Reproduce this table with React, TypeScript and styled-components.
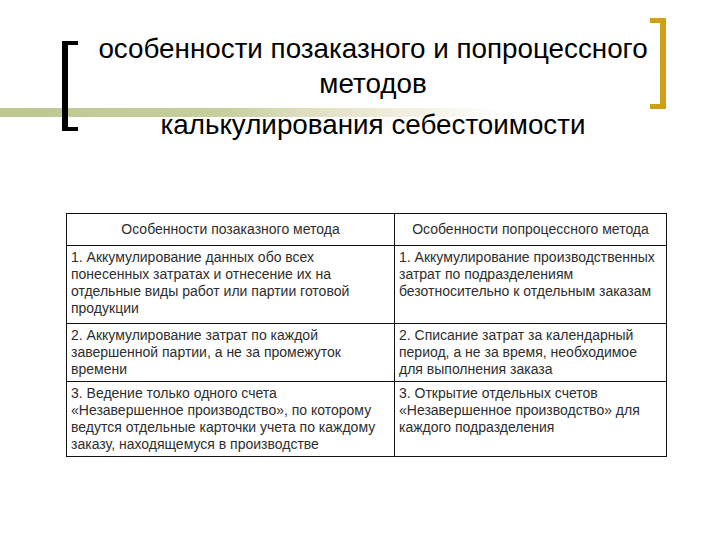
import React from 'react';
import styled, { createGlobalStyle } from 'styled-components';

const GlobalStyle = createGlobalStyle`
  html, body {
    margin: 0;
    padding: 0;
    background: #ffffff;
  }
  body {
    font-family: "Liberation Sans", Arial, sans-serif;
  }
`;

const Slide = styled.div`
  width: 720px;
  height: 540px;
  background: #ffffff;
  overflow: hidden;
`;

const Header = styled.header`
  position: relative;
  padding-top: 31px;
`;

const Stripe = styled.div`
  position: absolute;
  left: 0;
  top: 108px;
  width: 500px;
  height: 9px;
  background: linear-gradient(
    to right,
    #bcc890 0%,
    #c6cf9d 45%,
    #dcdebf 60%,
    #eeebd6 76%,
    rgba(255, 255, 255, 0) 100%
  );
  filter: blur(0.6px);
  z-index: 0;
`;

const Bracket = styled.div<{ $side: 'left' | 'right' }>`
  position: absolute;
  box-sizing: border-box;
  width: 16px;
  z-index: 1;
  ${({ $side }) =>
    $side === 'left'
      ? `
    left: 62px;
    top: 41px;
    height: 90px;
    border-left: 6px solid #000000;
    border-top: 4px solid #000000;
    border-bottom: 4px solid #000000;
  `
      : `
    left: 650px;
    top: 18px;
    height: 91px;
    border-right: 6px solid #cfa014;
    border-top: 5px solid #cfa014;
    border-bottom: 5px solid #cfa014;
  `}
`;

const Title = styled.h1`
  position: relative;
  z-index: 2;
  margin: 0 0 0 80px;
  width: 586px;
  font-weight: normal;
  font-size: 27.8px;
  line-height: 35px;
  color: #000000;
  text-align: center;
`;

const TitleLine = styled.span<{ $gap?: number }>`
  display: block;
  margin-top: ${({ $gap }) => $gap ?? 0}px;
`;

const Table = styled.table`
  margin: 71px 0 0 66px;
  width: 601px;
  table-layout: fixed;
  border-collapse: collapse;
  border: 1px solid #111111;
  font-size: 14px;
  line-height: 17px;
  color: #2e2e2e;
`;

const Row = styled.tr<{ $h: number }>`
  height: ${({ $h }) => $h}px;
`;

const HeadCell = styled.th`
  border: 1px solid #111111;
  padding: 0 4px;
  font-weight: normal;
  text-align: center;
  vertical-align: middle;
`;

const Cell = styled.td`
  border: 1px solid #111111;
  padding: 3px 4px;
  text-align: left;
  vertical-align: top;
`;

const rows: { h: number; job: string; process: string }[] = [
  {
    h: 78,
    job: '1. Аккумулирование данных обо всех понесенных затратах и отнесение их на отдельные виды работ или партии готовой продукции',
    process:
      '1. Аккумулирование производственных затрат по подразделениям безотносительно к отдельным заказам',
  },
  {
    h: 56,
    job: '2. Аккумулирование затрат по каждой завершенной партии, а не за промежуток времени',
    process:
      '2. Списание затрат за календарный период, а не за время, необходимое для выполнения заказа',
  },
  {
    h: 73,
    job: '3. Ведение только одного счета «Незавершенное производство», по которому ведутся отдельные карточки учета по каждому заказу, находящемуся в производстве',
    process:
      '3. Открытие отдельных счетов «Незавершенное производство» для каждого подразделения',
  },
];

const App: React.FC = () => {
  return (
    <>
      <GlobalStyle />
      <Slide>
        <Header>
          <Stripe />
          <Bracket $side="left" />
          <Bracket $side="right" />
          <Title>
            <TitleLine>особенности позаказного и попроцессного методов</TitleLine>
            <TitleLine $gap={6}>калькулирования себестоимости</TitleLine>
          </Title>
        </Header>

        <Table>
          <colgroup>
            <col style={{ width: 328 }} />
            <col />
          </colgroup>
          <thead>
            <Row $h={32}>
              <HeadCell>Особенности позаказного метода</HeadCell>
              <HeadCell>Особенности попроцессного метода</HeadCell>
            </Row>
          </thead>
          <tbody>
            {rows.map((r, i) => (
              <Row key={i} $h={r.h}>
                <Cell>{r.job}</Cell>
                <Cell>{r.process}</Cell>
              </Row>
            ))}
          </tbody>
        </Table>
      </Slide>
    </>
  );
};

export default App;
